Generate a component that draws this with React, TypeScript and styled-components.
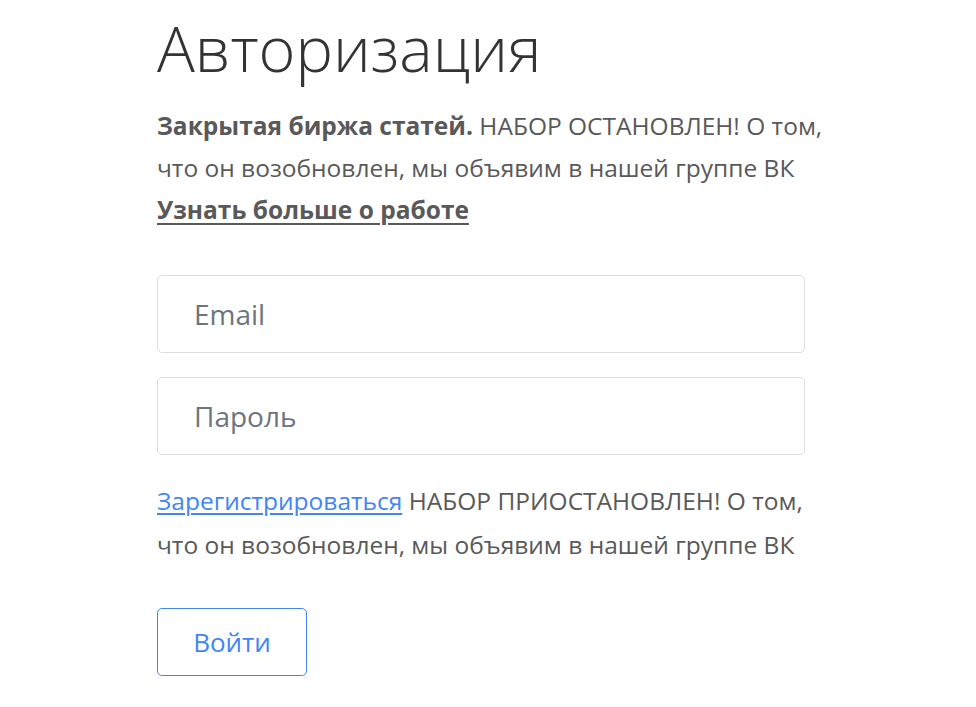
import React, { useState } from 'react'
import styled, { createGlobalStyle } from 'styled-components'

const GlobalStyle = createGlobalStyle`
  html, body {
    margin: 0;
    padding: 0;
    background: #fff;
  }
  body {
    font-family: "Open Sans", "Noto Sans", sans-serif;
    color: #555;
  }
`

const Page = styled.div`
  display: flex;
  justify-content: flex-start;
  padding: 0 0 0 157px;
`

const Column = styled.div`
  width: 680px;
  display: flex;
  flex-direction: column;
`

const Title = styled.h1`
  margin: 8px 0 0;
  font-size: 63px;
  font-weight: 300;
  line-height: 80px;
  color: #333;
`

const Text = styled.p`
  margin: 0;
  font-size: 24.5px;
  line-height: 42px;
  color: #595959;
`

const Intro = styled(Text)`
  margin-top: 17px;
`

const Strong = styled.b`
  font-weight: 700;
`

const MoreLink = styled.a`
  font-weight: 700;
  color: #595959;
  text-decoration: underline;
  text-underline-offset: 4px;
`

const Form = styled.form`
  display: flex;
  flex-direction: column;
  gap: 24px;
  margin-top: 44px;
`

const Input = styled.input`
  box-sizing: border-box;
  width: 648px;
  height: 78px;
  padding: 0 36px;
  border: 1px solid #ddd;
  border-radius: 5px;
  background: #fff;
  font-family: inherit;
  font-size: 28px;
  color: #333;

  &::placeholder {
    color: #6c757d;
  }

  &:focus {
    outline: none;
    border-color: #4285f4;
  }
`

const Note = styled(Text)`
  margin-top: 0;
  line-height: 44px;
`

const RegisterLink = styled.a`
  color: #4285f4;
  text-decoration: underline;
  text-underline-offset: 3px;
`

const SubmitButton = styled.button`
  box-sizing: border-box;
  align-self: flex-start;
  width: 150px;
  height: 68px;
  margin-top: 17px;
  border: 1px solid #4285f4;
  border-radius: 5px;
  background: #fff;
  font-family: inherit;
  font-size: 26px;
  color: #4285f4;
  cursor: pointer;
`

export default function App() {
  const [email, setEmail] = useState('')
  const [password, setPassword] = useState('')

  return (
    <>
      <GlobalStyle />
      <Page>
        <Column>
          <Title>Авторизация</Title>
          <Intro>
            <Strong>Закрытая биржа статей.</Strong> НАБОР ОСТАНОВЛЕН! О том, что он возобновлен, мы объявим в нашей группе ВК
            <br />
            <MoreLink href="#">Узнать больше о работе</MoreLink>
          </Intro>
          <Form onSubmit={e => e.preventDefault()}>
            <Input
              type="email"
              placeholder="Email"
              value={email}
              onChange={e => setEmail(e.target.value)}
            />
            <Input
              type="password"
              placeholder="Пароль"
              value={password}
              onChange={e => setPassword(e.target.value)}
            />
            <Note>
              <RegisterLink href="#">Зарегистрироваться</RegisterLink> НАБОР ПРИОСТАНОВЛЕН! О том, что он возобновлен, мы объявим в нашей группе ВК
            </Note>
            <SubmitButton type="submit">Войти</SubmitButton>
          </Form>
        </Column>
      </Page>
    </>
  )
}
